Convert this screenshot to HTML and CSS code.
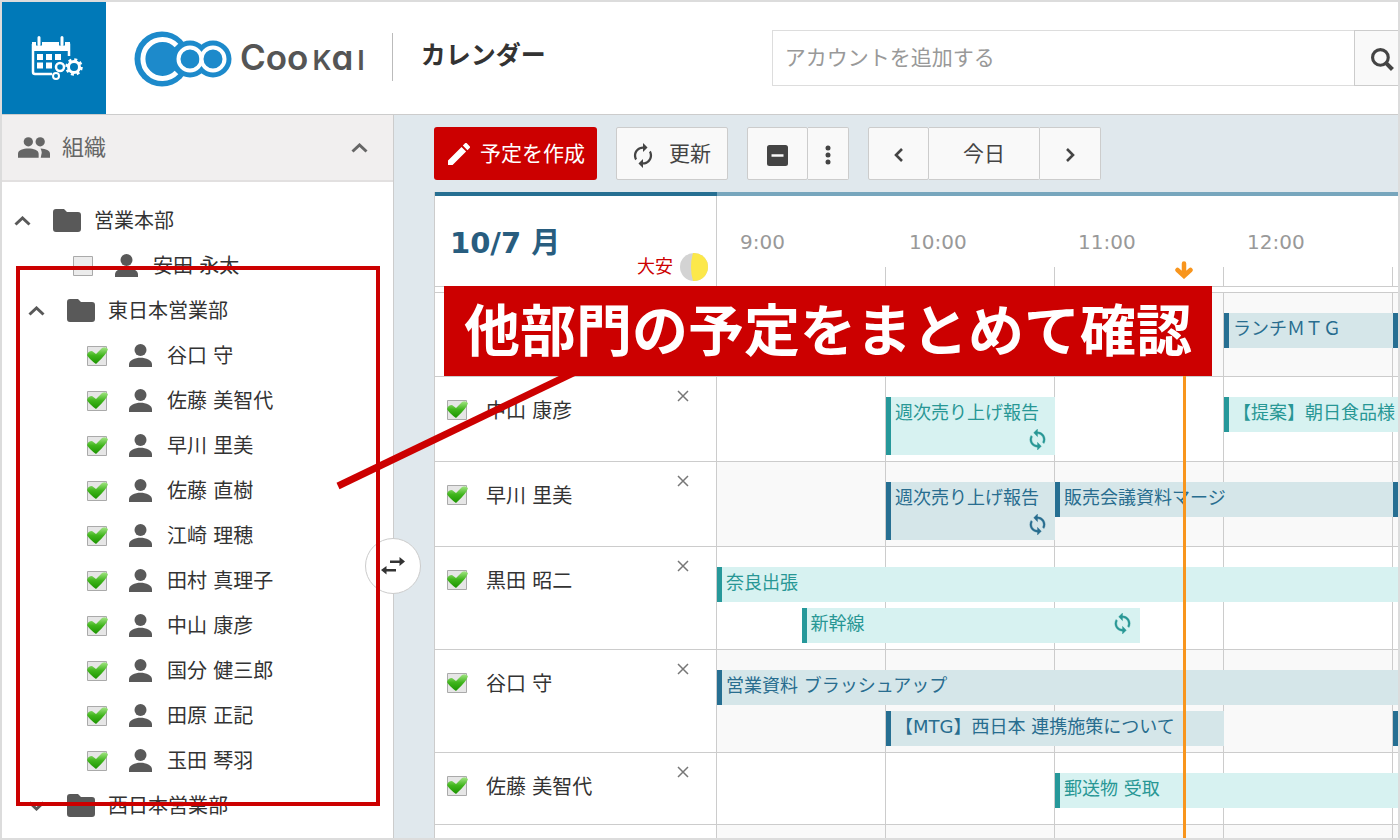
FILE: index.html
```html
<!DOCTYPE html>
<html lang="ja">
<head>
<meta charset="utf-8">
<meta name="viewport" content="width=device-width, initial-scale=1">
<title>カレンダー - CooKai</title>
<link rel="stylesheet" href="styles.css">
</head>
<body>
<svg class="sprite" aria-hidden="true">
  <symbol id="person" viewBox="0 0 23 23"><circle cx="11.500" cy="6" r="6"/><path d="M0 23v-2.500C0 16 6 13.700 11.500 13.700S23 16 23 20.500V23Z"/></symbol>
  <symbol id="people" viewBox="0 0 31 20"><circle cx="10" cy="4.500" r="4.500"/><circle cx="21.500" cy="4.500" r="4.500"/><path d="M0 20v-4c0-3.500 5-5 10-5s10 1.500 10 5v4zM22 20h9v-4c0-3-4-4.800-9-5 -.6 0 1 1.500 1 4z"/></symbol>
  <symbol id="folder" viewBox="0 0 28 23"><path d="M3 0h8l3 3h11a3 3 0 0 1 3 3v14a3 3 0 0 1-3 3H3a3 3 0 0 1-3-3V3a3 3 0 0 1 3-3z"/></symbol>
  <symbol id="up" viewBox="0 0 17 10"><path d="M1.500 8.500 8.500 2l7 6.500" fill="none" stroke="currentColor" stroke-width="3"/></symbol>
  <symbol id="down" viewBox="0 0 17 10"><path d="M1.500 1.500l7 6.500 7-6.500" fill="none" stroke="currentColor" stroke-width="3"/></symbol>
  <symbol id="prev" viewBox="0 0 10 14"><path d="M8 1 2 7l6 6" fill="none" stroke="currentColor" stroke-width="2.600"/></symbol>
  <symbol id="next" viewBox="0 0 10 14"><path d="M2 1l6 6-6 6" fill="none" stroke="currentColor" stroke-width="2.600"/></symbol>
  <symbol id="renew" viewBox="3.500 1 17 22"><path d="M12 6v3l4-4-4-4v3c-4.420 0-8 3.580-8 8 0 1.570.46 3.030 1.240 4.260L6.700 14.800c-.45-.83-.7-1.790-.7-2.800 0-3.310 2.690-6 6-6zm6.760 1.740L17.300 9.200c.44.84.7 1.790.7 2.800 0 3.310-2.690 6-6 6v-3l-4 4 4 4v-3c4.420 0 8-3.580 8-8 0-1.570-.46-3.030-1.240-4.260z"/></symbol>
  <symbol id="sync" viewBox="3.500 1 17 22"><path d="M12 4V1L8 5l4 4V6c3.310 0 6 2.690 6 6 0 1.010-.25 1.970-.7 2.800l1.460 1.460C19.540 15.030 20 13.570 20 12c0-4.420-3.580-8-8-8zm0 14c-3.310 0-6-2.690-6-6 0-1.010.25-1.970.7-2.800L5.240 7.740C4.460 8.970 4 10.430 4 12c0 4.420 3.580 8 8 8v3l4-4-4-4v3z" stroke="currentColor" stroke-width=".4"/></symbol>
  <symbol id="edit" viewBox="3 3 18 18"><path d="M3 17.250V21h3.750L17.810 9.940l-3.750-3.750L3 17.250zM20.710 7.040c.39-.39.39-1.020 0-1.410l-2.340-2.340c-.39-.39-1.020-.39-1.410 0l-1.830 1.830 3.750 3.750 1.830-1.830z"/></symbol>
  <symbol id="minus" viewBox="0 0 21 21"><path fill-rule="evenodd" d="M2.500 0h16A2.500 2.500 0 0 1 21 2.500v16a2.500 2.500 0 0 1-2.500 2.500h-16A2.500 2.500 0 0 1 0 18.500v-16A2.500 2.500 0 0 1 2.500 0zM4.500 9.300v2.400h12V9.300z"/></symbol>
  <symbol id="more" viewBox="0 0 6 20"><circle cx="3" cy="3" r="2.500"/><circle cx="3" cy="10" r="2.500"/><circle cx="3" cy="17" r="2.500"/></symbol>
  <symbol id="search" viewBox="0 0 22 22"><g fill="none" stroke="currentColor"><circle cx="9" cy="9" r="7.500" stroke-width="3"/><path d="m14 14 6.500 6.500" stroke-width="4"/></g></symbol>
  <symbol id="close" viewBox="0 0 12 12"><path d="m1 1 10 10M11 1 1 11" fill="none" stroke="currentColor" stroke-width="1.500"/></symbol>
  <symbol id="swap" viewBox="0 0 26 20"><path d="M19.500 1 25 5.500 19.500 10V7H10V4.500h9.500zM6.500 10v3H16v2.500H6.500v3L1 14z"/></symbol>
</svg>

<div class="app">
  <header class="header">
    <a class="home" href="#" aria-label="ホーム">
      <svg width="52" height="46" viewBox="0 0 52 46">
        <g fill="none" stroke="#fff">
          <path d="M2 9h36v12M2 9v28a2 2 0 0 0 2 2h17" stroke-width="2.500" stroke-linejoin="round"/>
          <path d="M1 7h38v9H1z" fill="#fff" stroke="none"/>
          <path d="M8 1.500v9M31 1.500v9" stroke="#0079b8" stroke-width="6"/>
          <path d="M8 2.500v7M31 2.500v7" stroke-width="3" stroke-linecap="round"/>
          <path d="M6 19h6v6H6zM15 19h6v6h-6zM24 19h6v6h-6zM6 27.500h6v6H6zM15 27.500h6v6h-6z" fill="#fff" stroke="none"/>
          <circle cx="29" cy="32" r="4" stroke-width="2.500"/>
          <circle cx="25" cy="41" r="3" stroke-width="2"/>
          <circle cx="43" cy="32" r="5.500" stroke-width="3"/>
          <circle cx="43" cy="32" r="7.500" stroke-width="2.500" stroke-dasharray="3 2.890"/>
        </g>
      </svg>
    </a>
    <div class="logo">
      <svg width="98" height="56" viewBox="0 0 98 56">
        <g fill="#1d8acb"><circle cx="28" cy="28" r="27.500"/><circle cx="56" cy="28" r="18.500"/><circle cx="79" cy="28" r="18.500"/></g>
        <path d="M42.500 14.500A19.500 19.500 0 1 0 42.500 41.500" fill="none" stroke="#fff" stroke-width="5"/>
        <g fill="#1d8acb" stroke="#fff" stroke-width="4"><circle cx="56" cy="28" r="11.500"/><circle cx="79" cy="28" r="11.500"/></g>
      </svg>
      <span class="wordmark">Coo<small>K</small>a<small>I</small></span>
    </div>
    <h1 class="title">カレンダー</h1>
    <form class="search">
      <input type="text" class="search-input" placeholder="アカウントを追加する" aria-label="アカウントを追加する">
      <button type="button" class="search-button" aria-label="検索"><svg width="23" height="23"><use href="#search"/></svg></button>
    </form>
  </header>

  <div class="body">
    <aside class="sidebar">
      <button type="button" class="side-head"><svg width="32" height="21"><use href="#people"/></svg><span>組織</span><svg class="side-toggle" width="17" height="10"><use href="#up"/></svg></button>
      <ul class="tree">
        <li class="node"><svg width="17" height="10"><use href="#up"/></svg><svg class="folder" width="28" height="23"><use href="#folder"/></svg>営業本部</li>
        <li><label class="user"><input type="checkbox" class="check"><svg width="23" height="23"><use href="#person"/></svg>安田 永太</label></li>
        <li class="node nested"><svg width="17" height="10"><use href="#up"/></svg><svg class="folder" width="28" height="23"><use href="#folder"/></svg>東日本営業部</li>
        <li><label class="user nested"><input type="checkbox" class="check" checked><svg width="23" height="23"><use href="#person"/></svg>谷口 守</label></li>
        <li><label class="user nested"><input type="checkbox" class="check" checked><svg width="23" height="23"><use href="#person"/></svg>佐藤 美智代</label></li>
        <li><label class="user nested"><input type="checkbox" class="check" checked><svg width="23" height="23"><use href="#person"/></svg>早川 里美</label></li>
        <li><label class="user nested"><input type="checkbox" class="check" checked><svg width="23" height="23"><use href="#person"/></svg>佐藤 直樹</label></li>
        <li><label class="user nested"><input type="checkbox" class="check" checked><svg width="23" height="23"><use href="#person"/></svg>江崎 理穂</label></li>
        <li><label class="user nested"><input type="checkbox" class="check" checked><svg width="23" height="23"><use href="#person"/></svg>田村 真理子</label></li>
        <li><label class="user nested"><input type="checkbox" class="check" checked><svg width="23" height="23"><use href="#person"/></svg>中山 康彦</label></li>
        <li><label class="user nested"><input type="checkbox" class="check" checked><svg width="23" height="23"><use href="#person"/></svg>国分 健三郎</label></li>
        <li><label class="user nested"><input type="checkbox" class="check" checked><svg width="23" height="23"><use href="#person"/></svg>田原 正記</label></li>
        <li><label class="user nested"><input type="checkbox" class="check" checked><svg width="23" height="23"><use href="#person"/></svg>玉田 琴羽</label></li>
        <li class="node nested"><svg width="17" height="10"><use href="#down"/></svg><svg class="folder" width="28" height="23"><use href="#folder"/></svg>西日本営業部</li>
      </ul>
      <button type="button" class="swap" aria-label="表示切替"><svg width="26" height="20"><use href="#swap"/></svg></button>
    </aside>

    <main class="main">
      <div class="toolbar">
        <button type="button" class="create"><svg width="22" height="22"><use href="#edit"/></svg>予定を作成</button>
        <button type="button" class="tool refresh"><svg width="20" height="25"><use href="#renew"/></svg>更新</button>
        <div class="group">
          <button type="button" class="tool collapse" aria-label="折りたたむ"><svg width="21" height="21"><use href="#minus"/></svg></button>
          <button type="button" class="tool more" aria-label="その他"><svg width="6" height="20"><use href="#more"/></svg></button>
        </div>
        <div class="group">
          <button type="button" class="tool step" aria-label="前日"><svg width="10" height="14"><use href="#prev"/></svg></button>
          <button type="button" class="tool today">今日</button>
          <button type="button" class="tool step" aria-label="翌日"><svg width="10" height="14"><use href="#next"/></svg></button>
        </div>
      </div>

      <section class="schedule">
        <div class="days">
          <div class="date"><h2>10/7 月</h2><div class="rokuyo">大安<svg width="28" height="28" viewBox="0 0 28 28"><circle cx="14" cy="14" r="14" fill="#d3d3d3"/><path d="M13 0h1a14 14 0 0 1 0 28h-1Q9 14 13 0z" fill="#fce84a"/></svg></div></div>
          <div class="hours"><span>9:00</span><span>10:00</span><span>11:00</span><span>12:00</span><span></span></div>
        </div>

        <div class="row first">
          <div class="name"></div>
          <div class="line"><div class="event blue at-12 to-13">ランチＭＴＧ</div><div class="event blue at-13"></div></div>
        </div>
        <div class="row">
          <div class="name"><label><input type="checkbox" class="check" checked>中山 康彦</label><button type="button" class="close" aria-label="閉じる"><svg width="12" height="12"><use href="#close"/></svg></button></div>
          <div class="line"><div class="event teal tall at-10 to-11">週次売り上げ報告<svg width="17" height="21"><use href="#sync"/></svg></div><div class="event teal at-12">【提案】朝日食品様</div></div>
        </div>
        <div class="row">
          <div class="name"><label><input type="checkbox" class="check" checked>早川 里美</label><button type="button" class="close" aria-label="閉じる"><svg width="12" height="12"><use href="#close"/></svg></button></div>
          <div class="line"><div class="event blue tall at-10 to-11">週次売り上げ報告<svg width="17" height="21"><use href="#sync"/></svg></div><div class="event blue at-11 to-13">販売会議資料マージ</div><div class="event blue at-13"></div></div>
        </div>
        <div class="row">
          <div class="name"><label><input type="checkbox" class="check" checked>黒田 昭二</label><button type="button" class="close" aria-label="閉じる"><svg width="12" height="12"><use href="#close"/></svg></button></div>
          <div class="line"><div class="event teal at-9">奈良出張</div><div class="event teal second at-9h to-11h">新幹線<svg width="17" height="21"><use href="#sync"/></svg></div></div>
        </div>
        <div class="row">
          <div class="name"><label><input type="checkbox" class="check" checked>谷口 守</label><button type="button" class="close" aria-label="閉じる"><svg width="12" height="12"><use href="#close"/></svg></button></div>
          <div class="line"><div class="event blue at-9">営業資料 ブラッシュアップ</div><div class="event blue second at-10 to-12">【MTG】西日本 連携施策について</div><div class="event blue second at-13"></div></div>
        </div>
        <div class="row">
          <div class="name"><label><input type="checkbox" class="check" checked>佐藤 美智代</label><button type="button" class="close" aria-label="閉じる"><svg width="12" height="12"><use href="#close"/></svg></button></div>
          <div class="line"><div class="event teal at-11">郵送物 受取</div></div>
        </div>
        <div class="row">
          <div class="name"><button type="button" class="close last" aria-label="閉じる"><svg width="12" height="12"><use href="#close"/></svg></button></div>
          <div class="line"></div>
        </div>

        <div class="now"><svg width="20" height="18" viewBox="0 0 20 18"><path d="M10 2.500v11M3.500 9 10 15l6.500-6" fill="none" stroke="#f8951d" stroke-width="4.500" stroke-linecap="round"/></svg></div>
      </section>
    </main>
  </div>

  <svg class="pointer" width="270" height="130" viewBox="0 0 270 130" aria-hidden="true"><path d="M2 122 262 -3" stroke="#c00" stroke-width="7"/></svg>
  <div class="frame" aria-hidden="true"></div>
  <p class="banner">他部門の予定をまとめて確認</p>
</div>
</body>
</html>
```

FILE: styles.css
```css
* { box-sizing: border-box; }

body {
  margin: 0;
  color: #333;
  font: 20px/30px "DejaVu Sans", "Noto Sans CJK JP", sans-serif;
}

button, input { margin: 0; font: inherit; color: inherit; }
button { cursor: pointer; }
svg { display: block; flex: none; fill: currentColor; }
.sprite { position: absolute; width: 0; height: 0; }

.app {
  position: relative;
  display: flex;
  flex-direction: column;
  height: 100vh;
  overflow: hidden;
  border: 2px solid #dcdcdc;
  background: #fff;
}

/* header */
.header {
  display: flex;
  align-items: center;
  flex: none;
  height: 113px;
  border-bottom: 1px solid #ccc;
}
.home {
  display: flex;
  align-items: center;
  justify-content: center;
  width: 104px;
  height: 112px;
  padding-left: 5px;
  background: #0079b8;
}
.logo {
  display: flex;
  align-items: center;
  gap: 8px;
  height: 48px;
  margin: 0 0 3px 28px;
  padding-right: 27px;
  border-right: 1px solid #bbb;
}
.logo > * { margin-top: 4px; }
.wordmark {
  color: #555;
  font: 600 35px/48px Inter, sans-serif;
  font-feature-settings: "cv11";
}
.wordmark small { margin-left: 4px; font-size: 27px; }
.title {
  flex: none;
  margin: 0 0 4px 28px;
  font-size: 25px;
  line-height: 40px;
}
.search { display: flex; flex: 1; height: 56px; margin-left: 226px; }
.search-input {
  flex: 1;
  min-width: 0;
  padding: 0 12px;
  border: 1px solid #ddd;
  border-right: 0;
  background: #fff;
  font-size: 21px;
}
.search-input::placeholder { color: #999; opacity: 1; }
.search-button {
  width: 44px;
  padding: 2px 0 0 16px;
  border: 1px solid #ccc;
  border-right: 0;
  background: #f9f9f9;
  color: #444;
}

.body { display: flex; flex: 1; min-height: 0; }

/* organisation tree */
.sidebar {
  position: relative;
  flex: none;
  width: 392px;
  border-right: 1px solid #ccc;
}
.side-head {
  display: flex;
  align-items: center;
  gap: 12px;
  width: 100%;
  height: 67px;
  padding: 0 25px 0 16px;
  border: 0;
  border-bottom: 2px solid #e2e0e0;
  background: #f1efef;
  color: #666;
  font-size: 22px;
}
.side-toggle { margin-left: auto; }
.tree { margin: 0; padding: 16px 0 0; list-style: none; }
.node, .user {
  display: flex;
  align-items: center;
  height: 45px;
}
.node { padding-left: 12px; }
.node.nested { padding-left: 26px; }
.user { gap: 22px; padding-left: 71px; }
.user.nested { padding-left: 85px; }
.user svg { margin-right: -7px; }
.tree svg { color: #595959; }
.folder { margin: 0 13px 0 22px; }

.check {
  flex: none;
  width: 22px;
  height: 20px;
  appearance: none;
  background: url("data:image/svg+xml,%3Csvg xmlns='http://www.w3.org/2000/svg' viewBox='0 0 22 20'%3E%3Cpath d='M.5.5h19v19H.5z' fill='%23ececec' stroke='%23aaa'/%3E%3C/svg%3E");
}
.check:checked {
  background: url("data:image/svg+xml,%3Csvg xmlns='http://www.w3.org/2000/svg' viewBox='0 0 22 20'%3E%3ClinearGradient id='g' x2='0' y2='1'%3E%3Cstop stop-color='%23a4e586'/%3E%3Cstop offset='.5' stop-color='%2340b51c'/%3E%3Cstop offset='1' stop-color='%231b9400'/%3E%3C/linearGradient%3E%3Cpath d='M.5.5h19v19H.5z' fill='%23e6e6e6' stroke='%23aaa'/%3E%3Cpath d='M0 9Q1 5 5 5L9 8 15 2Q18 0 21 3 20 8 9 18 2 13 0 9z' fill='url(%23g)'/%3E%3C/svg%3E");
}
.user .check { margin-right: -2px; }

.swap {
  position: absolute;
  top: 423px;
  right: -28px;
  z-index: 1;
  display: flex;
  align-items: center;
  justify-content: center;
  width: 56px;
  height: 56px;
  padding: 0;
  border: 1px solid #ccc;
  border-radius: 50%;
  background: #fff;
}

/* main pane */
.main {
  display: flex;
  flex: 1;
  flex-direction: column;
  min-width: 0;
  padding: 12px 0 0 40px;
  background: #e0e8ed;
}
.toolbar { display: flex; gap: 19px; flex: none; height: 53px; }
.create {
  display: flex;
  align-items: center;
  gap: 10px;
  padding: 0 12px 0 14px;
  border: 0;
  border-radius: 3px;
  background: #c00;
  color: #fff;
  font-size: 21px;
}
.tool {
  display: flex;
  align-items: center;
  justify-content: center;
  padding: 0;
  border: 1px solid #ccc;
  border-radius: 2px;
  background: #f9f9f9;
  color: #444;
  font-size: 21px;
}
.refresh { gap: 16px; width: 112px; }
.group { display: flex; }
.group .tool + .tool { border-left: 0; border-radius: 0 2px 2px 0; }
.collapse { width: 61px; }
.more { width: 41px; }
.step { width: 61px; }
.today { width: 111px; }
.tool svg { margin-top: 3px; }

/* schedule */
.schedule {
  position: relative;
  flex: 1;
  min-height: 0;
  margin-top: 12px;
  overflow: hidden;
  border-left: 1px solid #ccc;
  background: #fff;
}
.days, .row { display: grid; grid-template-columns: 282px 845px; }
.days { height: 95px; border-bottom: 1px solid #ccc; }
.date {
  position: relative;
  border-top: 4px solid #266f92;
  box-shadow: inset -1px 0 #ccc;
}
.date h2 {
  margin: 27px 0 0 15px;
  color: #285d7f;
  font-size: 29px;
  line-height: 40px;
}
.rokuyo {
  position: absolute;
  right: 9px;
  bottom: 4px;
  display: flex;
  align-items: center;
  gap: 7px;
  color: #c00;
  font-size: 18px;
}
.hours {
  display: grid;
  grid-template-columns: repeat(5, 1fr);
  border-top: 4px solid #77a6bd;
  color: #999;
  background: repeating-linear-gradient(90deg, transparent 0 168px, #ccc 168px 169px) 0 100% / 100% 19px no-repeat;
}
.hours span { padding: 31px 0 0 23px; }

.row { min-height: 72px; border-bottom: 1px solid #ccc; }
.row.first { min-height: 85px; margin-top: 5px; border-top: 1px solid #ccc; }
.name {
  display: flex;
  align-items: flex-start;
  justify-content: space-between;
  padding: 13px 27px 0 12px;
  border-right: 1px solid #ccc;
}
.name label { display: flex; align-items: center; gap: 17px; padding-top: 6px; }
.name .check { margin-bottom: 2px; }
.close { padding: 0; border: 0; background: none; color: #777; }
.close.last { margin-left: auto; }
.line {
  display: grid;
  grid-template-columns: repeat(10, 1fr);
  align-content: start;
  align-items: start;
  row-gap: 6px;
  padding: 20px 0 6px;
  background: repeating-linear-gradient(90deg, transparent 0 168px, #ccc 168px 169px);
}
.row:nth-of-type(even) .line { background-color: #f9f9f9; }

.event {
  display: flex;
  flex-wrap: wrap;
  align-items: center;
  align-content: flex-start;
  grid-row: 1;
  grid-column-end: -1;
  height: 35px;
  overflow: hidden;
  padding: 0 9px 0 4px;
  border-left: 5px solid;
  font-size: 18px;
  line-height: 32px;
  white-space: nowrap;
}
.event svg { margin: 0 0 2px auto; }
.tall { height: 58px; }
.second { grid-row: 2; }
.teal { border-color: #26989a; background: #d7f2f1; color: #289795; }
.blue { border-color: #266f92; background: #d5e6e9; color: #286d8f; }
.at-9 { grid-column-start: 1; }
.at-9h { grid-column-start: 2; }
.at-10 { grid-column-start: 3; }
.at-11 { grid-column-start: 5; }
.at-12 { grid-column-start: 7; }
.at-13 { grid-column-start: 9; }
.to-11 { grid-column-end: 5; }
.to-11h { grid-column-end: 6; }
.to-12 { grid-column-end: 7; }
.to-13 { grid-column-end: 9; }

/* current time marker */
.now {
  position: absolute;
  top: 69px;
  bottom: 0;
  left: 739px;
  width: 21px;
  background: linear-gradient(#f8951d, #f8951d) 50% 26px / 3px 100% no-repeat;
}

/* annotations */
.pointer { position: absolute; top: 362px; left: 334px; z-index: 2; }
.frame {
  position: absolute;
  top: 264px;
  left: 14px;
  z-index: 2;
  width: 364px;
  height: 540px;
  border: 4px solid #c00;
  pointer-events: none;
}
.banner {
  position: absolute;
  top: 284px;
  left: 442px;
  z-index: 3;
  margin: 0;
  padding: 0 20px 8px;
  background: #c00;
  color: #fff;
  font: bold 56px/82px "Noto Sans CJK JP", sans-serif;
}
```
